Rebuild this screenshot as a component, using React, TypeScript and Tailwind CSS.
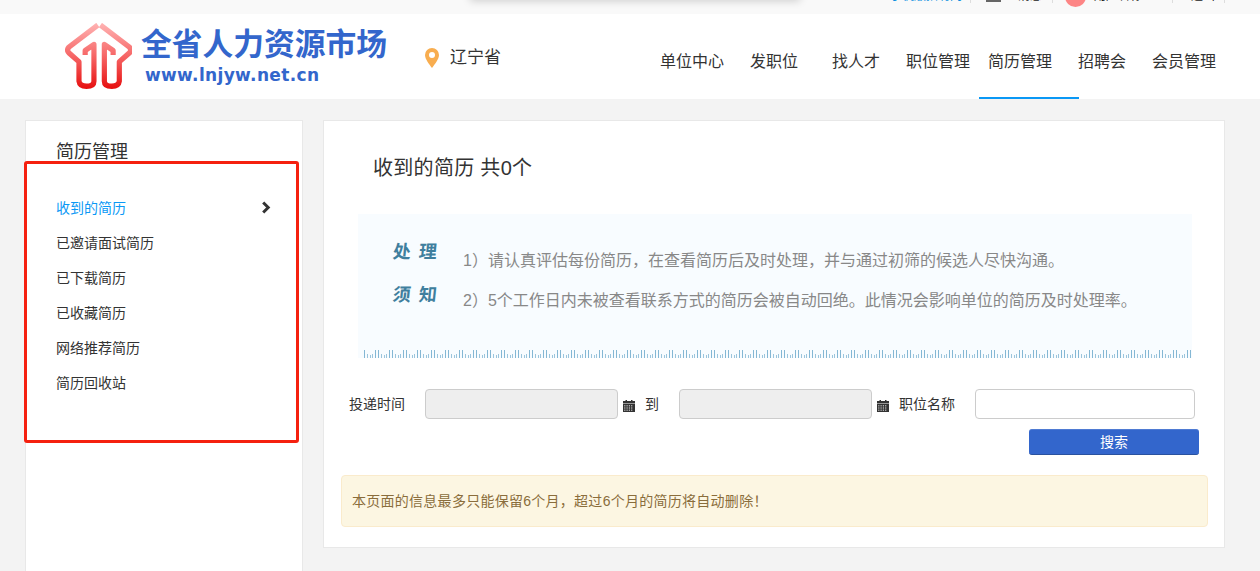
import React from "react";

const FONT = "font-['Liberation_Sans','Noto_Sans_CJK_SC',sans-serif]";

function Logo() {
  const d =
    "M294 78 L205 143 Q197 152 205 160 L236 186 L236 243 Q238 258 259 258 Q282 258 282 243 L282 135 L255 153 L255 166";
  return (
    <svg width="67" height="68" viewBox="193 72 206 200" preserveAspectRatio="none" className="shrink-0">
      <defs>
        <linearGradient id="lg" gradientUnits="userSpaceOnUse" x1="0" y1="72" x2="0" y2="268">
          <stop offset="0" stopColor="#ffb4b4" />
          <stop offset="0.5" stopColor="#f66565" />
          <stop offset="1" stopColor="#e60d0d" />
        </linearGradient>
      </defs>
      <path d={d} fill="none" stroke="url(#lg)" strokeWidth="16" strokeLinejoin="round" />
      <path d={d} fill="none" stroke="url(#lg)" strokeWidth="16" strokeLinejoin="round" transform="translate(596 0) scale(-1 1)" />
    </svg>
  );
}

function Pin() {
  return (
    <svg width="14" height="20" viewBox="0 0 14 20" className="shrink-0">
      <path
        fillRule="evenodd"
        d="M7 0a7 7 0 0 1 7 7c0 4-4 9-7 13C4 16 0 11 0 7a7 7 0 0 1 7-7zm0 4a3 3 0 1 0 0 6 3 3 0 0 0 0-6z"
        fill="#f8ad4f"
      />
    </svg>
  );
}

function Calendar() {
  return (
    <svg width="12" height="12" viewBox="0 0 12 12" className="block shrink-0">
      <rect x="0" y="1" width="12" height="2.5" fill="#333" />
      <rect x="2.5" y="0" width="1.5" height="1.5" fill="#333" />
      <rect x="8" y="0" width="1.5" height="1.5" fill="#333" />
      <rect x="0" y="4" width="12" height="8" fill="#333" />
      {[5.2, 7.4, 9.6].map((y) =>
        [1.2, 3.5, 5.8, 8.1].map((x) => <rect key={`${x}-${y}`} x={x} y={y} width="1.2" height="1.2" fill="#ccc" />)
      )}
    </svg>
  );
}

function Ruler() {
  return (
    <svg className="block h-[9px] w-full" aria-hidden="true">
      <defs>
        <pattern id="ticks" width="14" height="9" patternUnits="userSpaceOnUse">
          <rect x="0" y="1" width="1" height="8" fill="#84b7d4" />
          <rect x="3" y="5" width="1" height="4" fill="#9cc5dc" />
          <rect x="6" y="6" width="1" height="3" fill="#9cc5dc" />
          <rect x="8" y="5" width="1" height="4" fill="#9cc5dc" />
          <rect x="11" y="1" width="1" height="8" fill="#84b7d4" />
        </pattern>
      </defs>
      <rect width="100%" height="9" fill="url(#ticks)" />
    </svg>
  );
}

const navItems: { label: string; w: string; active?: boolean }[] = [
  { label: "单位中心", w: "w-[90px]" },
  { label: "发职位", w: "w-[82px]" },
  { label: "找人才", w: "w-[74px]" },
  { label: "职位管理", w: "w-[82px]" },
  { label: "简历管理", w: "w-[100px] -mr-[10px]", active: true },
  { label: "招聘会", w: "w-[74px]" },
  { label: "会员管理", w: "w-[82px]" },
];

const sideItems = ["收到的简历", "已邀请面试简历", "已下载简历", "已收藏简历", "网络推荐简历", "简历回收站"];

export default function App() {
  return (
    <div className={`${FONT} relative h-[571px] overflow-hidden bg-[#f3f3f3] text-[#333]`}>
      {/* top bar, cut off by the window */}
      <div className="relative h-[14px] overflow-hidden bg-[#f9f9f9]">
        <div className="absolute left-[470px] -top-[10px] h-[10px] w-[330px] shadow-[0_1px_8px_rgba(0,0,0,0.18)]" />
        <div className="-mt-[14px] flex justify-end pr-[35px] text-[12px] leading-[20px]">
          <div className="h-[17px] border-r border-[#ddd] pr-2 text-[#0a8fe0]">手机版招聘网</div>
          <div className="flex h-[17px] w-[82px] border-r border-[#ddd] pl-[15px]">
            <div className="mr-[17px] h-[16px] w-[15px] bg-[#666]" />
            <span className="text-[#222]">消息</span>
          </div>
          <div className="flex h-[17px] w-[120px] border-r border-[#ddd] pl-[12px]">
            <div className="mr-2 h-[21px] w-[21px] rounded-full bg-[#fd8585]" />
            <span className="text-[#222]">用户名称</span>
          </div>
          <div className="h-[17px] w-[52px] border-r border-[#ddd] pl-[18px] text-[#222]">退出</div>
        </div>
      </div>

      {/* header */}
      <header className="flex h-[85px] items-stretch bg-white pl-[65px]">
        <div className="flex w-[360px] items-center pt-[1px]">
          <Logo />
          <div className="ml-[9px] -mt-[1px] flex flex-col">
            <div className="text-[30.75px] font-bold leading-[36px] text-[#3366cc]">全省人力资源市场</div>
            <div className="ml-[4px] mt-px font-['DejaVu_Sans',sans-serif] text-[17px] font-bold leading-[22px] tracking-[0.35px] text-[#3366cc]">
              www.lnjyw.net.cn
            </div>
          </div>
        </div>
        <div className="flex w-[226px] items-center gap-[11px] pt-[2px]">
          <Pin />
          <span className="text-[17px] text-[#333]">辽宁省</span>
        </div>
        <nav className="flex h-full">
          {navItems.map((n) => (
            <div
              key={n.label}
              className={`${n.w} flex items-center whitespace-nowrap border-b-2 pl-[9px] pt-[13px] text-[16px] text-[#333] ${
                n.active ? "border-[#0a98f5]" : "border-transparent"
              }`}
            >
              {n.label}
            </div>
          ))}
        </nav>
      </header>

      {/* body */}
      <div className="flex gap-[20px] pl-[25px] pt-[21px]">
        <aside className="h-[500px] w-[278px] shrink-0 border border-[#e8e8e8] bg-white pl-[30px] pr-[31px] pt-[18px]">
          <h2 className="text-[18px] font-normal leading-[26px] text-[#333]">简历管理</h2>
          <ul className="mt-[26px]">
            {sideItems.map((s, i) => (
              <li
                key={s}
                className={`flex h-[35px] items-center justify-between text-[14px] ${i === 0 ? "text-[#0a98f5]" : "text-[#333]"}`}
              >
                {s}
                {i === 0 && (
                  <svg width="10" height="13" viewBox="0 0 10 13" className="-mt-[2px]">
                    <path d="M2.2 1.5 L7.2 6.5 L2.2 11.5" fill="none" stroke="#333" strokeWidth="3" />
                  </svg>
                )}
              </li>
            ))}
          </ul>
        </aside>

        <main className="h-[428px] w-[902px] shrink-0 border border-[#e8e8e8] bg-white pl-[17px] pr-[16px]">
          <h1 className="ml-[32px] mt-[32px] text-[20px] font-normal leading-[30px] tracking-[0.3px] text-[#333]">收到的简历 共0个</h1>

          <section className="ml-[17px] mt-[31px] h-[144px] w-[834px] bg-[#f8fcff] pl-[6px] pr-[1px]">
            <div className="flex h-[135px]">
              <div className="ml-[29px] w-[70px] pt-[27px] text-[18px] font-bold leading-[22px] text-[#3f7f9e]">
                <div className="-skew-x-6 tracking-[8px]">处理</div>
                <div className="mt-[21px] -skew-x-6 tracking-[8px]">须知</div>
              </div>
              <div className="pt-[35px] text-[16px] leading-[24px] text-[#888]">
                <p>1）请认真评估每份简历，在查看简历后及时处理，并与通过初筛的候选人尽快沟通。</p>
                <p className="mt-[16px]">2）5个工作日内未被查看联系方式的简历会被自动回绝。此情况会影响单位的简历及时处理率。</p>
              </div>
            </div>
            <Ruler />
          </section>

          <form className="mt-[31px] flex items-center pl-[8px] text-[14px] text-[#333]">
            <span className="w-[76px]">投递时间</span>
            <div className="h-[30px] w-[193px] rounded-[4px] border border-[#ccc] bg-[#eee]" />
            <span className="ml-[5px] mt-[3px]"><Calendar /></span>
            <span className="ml-[10px] w-[34px]">到</span>
            <div className="h-[30px] w-[193px] rounded-[4px] border border-[#ccc] bg-[#eee]" />
            <span className="ml-[5px] mt-[3px]"><Calendar /></span>
            <span className="ml-[10px] w-[76px]">职位名称</span>
            <div className="h-[30px] w-[220px] rounded-[4px] border border-[#ccc] bg-white" />
          </form>

          <div className="mt-[10px] flex justify-end pr-[9px]">
            <button
              type="button"
              className="h-[26px] w-[170px] rounded-[3px] border-b border-t border-b-[#2a529f] border-t-[#4f7bd3] bg-[#3366cc] text-[14px] text-white"
            >
              搜索
            </button>
          </div>

          <div className="mt-[20px] flex h-[52px] items-center rounded-[4px] border border-[#faebcc] bg-[#fcf6e2] px-[10px] text-[14px] tracking-[0.27px] text-[#8a6d3b]">
            本页面的信息最多只能保留6个月，超过6个月的简历将自动删除！
          </div>
        </main>
      </div>

      {/* annotation laid over the page */}
      <div className="absolute left-[24px] top-[161px] h-[282px] w-[275px] rounded-[3px] border-[3px] border-[#f5200f]" />
    </div>
  );
}
